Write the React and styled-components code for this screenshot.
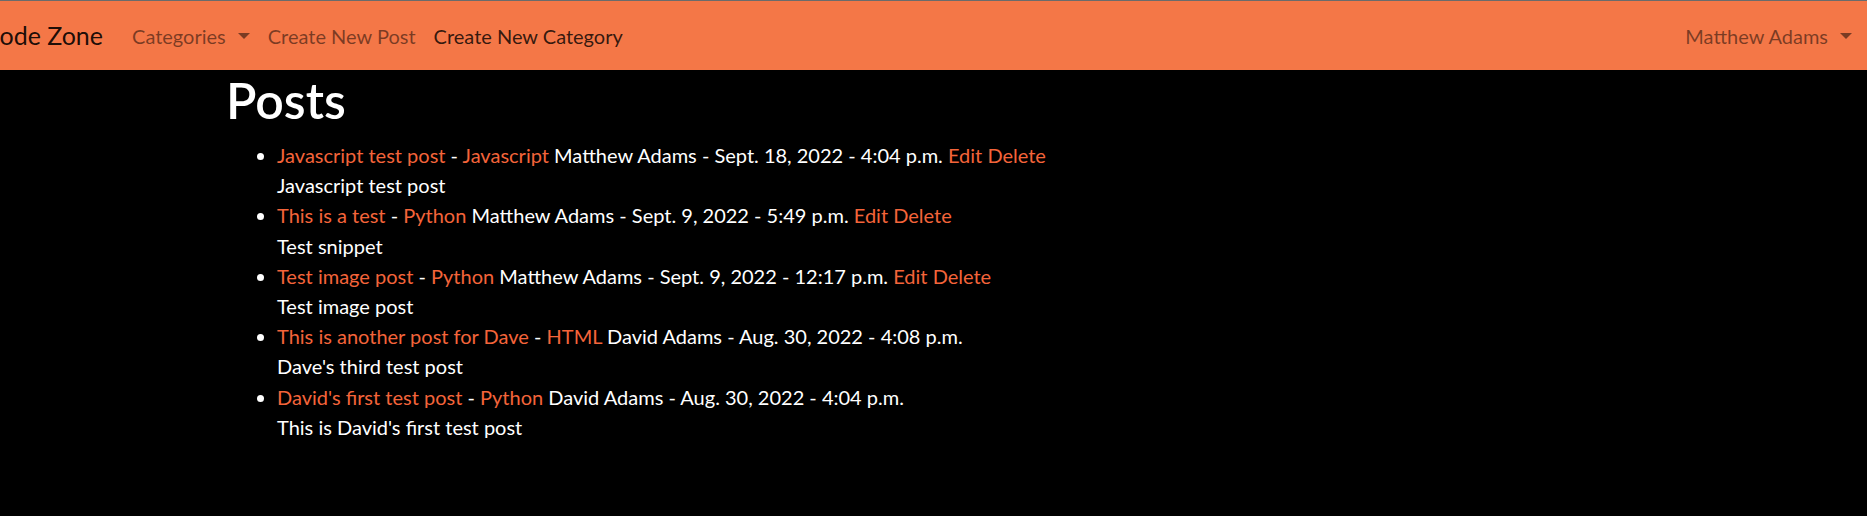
import React from 'react'
import styled, {createGlobalStyle} from "styled-components";

const GlobalStyle = createGlobalStyle`
  html, body {
    margin: 0;
    padding: 0;
    background: #000;
  }
  body {
    font-family: Lato, "Noto Sans", "Liberation Sans", sans-serif;
    font-size: 20px;
    line-height: 30.2px;
    color: #fff;
    overflow: hidden;
  }
`

const posts = [
    {title: "Javascript test post", category: "Javascript", author: "Matthew Adams", date: "Sept. 18, 2022 - 4:04 p.m.", owner: true, body: "Javascript test post"},
    {title: "This is a test", category: "Python", author: "Matthew Adams", date: "Sept. 9, 2022 - 5:49 p.m.", owner: true, body: "Test snippet"},
    {title: "Test image post", category: "Python", author: "Matthew Adams", date: "Sept. 9, 2022 - 12:17 p.m.", owner: true, body: "Test image post"},
    {title: "This is another post for Dave", category: "HTML", author: "David Adams", date: "Aug. 30, 2022 - 4:08 p.m.", owner: false, body: "Dave's third test post"},
    {title: "David's first test post", category: "Python", author: "David Adams", date: "Aug. 30, 2022 - 4:04 p.m.", owner: false, body: "This is David's first test post"},
]

const Navbar = styled.nav`
  display: flex;
  align-items: center;
  height: 69px;
  background-color: #f47747;
  border-top: 1px solid #6b6b6b;
  padding: 0 6px 0 0;
  box-sizing: content-box;
`

const Brand = styled.a`
  font-size: 25px;
  color: rgba(0, 0, 0, 0.9);
  margin-left: -17px;
  margin-right: 20px;
  text-decoration: none;
  white-space: nowrap;
`

const NavList = styled.div`
  display: flex;
  align-items: center;
  margin-left: ${props => props.right ? "auto" : "0"};
`

const NavLink = styled.a`
  font-size: 20px;
  padding: 11px 9px 9px;
  color: ${props => props.active ? "rgba(0, 0, 0, 0.8)" : "rgba(0, 0, 0, 0.5)"};
  text-decoration: none;
  display: flex;
  align-items: center;
  white-space: nowrap;
`

const Caret = styled.span`
  display: inline-block;
  margin-left: 12px;
  border-top: 6px solid currentColor;
  border-left: 6px solid transparent;
  border-right: 6px solid transparent;
  border-bottom: 0;
`

const Main = styled.main`
  padding-left: 226px;
`

const Heading = styled.h1`
  font-size: 50px;
  font-weight: 600;
  line-height: 1.2;
  margin: 0 0 10px 0;
`

const PostList = styled.ul`
  margin: 0;
  padding-left: 51px;
`

const Item = styled.li`
  color: #fff;
`

const Link = styled.a`
  color: #f4643a;
  text-decoration: none;
`

const Body = styled.div``

const App = () => {
    return (
        <>
            <GlobalStyle/>
            <Navbar>
                <Brand href="#">Code Zone</Brand>
                <NavList>
                    <NavLink href="#">Categories<Caret/></NavLink>
                    <NavLink href="#">Create New Post</NavLink>
                    <NavLink href="#" active>Create New Category</NavLink>
                </NavList>
                <NavList right>
                    <NavLink href="#">Matthew Adams<Caret/></NavLink>
                </NavList>
            </Navbar>
            <Main>
                <Heading>Posts</Heading>
                <PostList>
                    {posts.map((post) => (
                        <Item key={post.title}>
                            <Link href="#">{post.title}</Link> - <Link href="#">{post.category}</Link> {post.author} - {post.date}
                            {post.owner && <> <Link href="#">Edit</Link> <Link href="#">Delete</Link></>}
                            <Body>{post.body}</Body>
                        </Item>
                    ))}
                </PostList>
            </Main>
        </>
    )
}

export default App
